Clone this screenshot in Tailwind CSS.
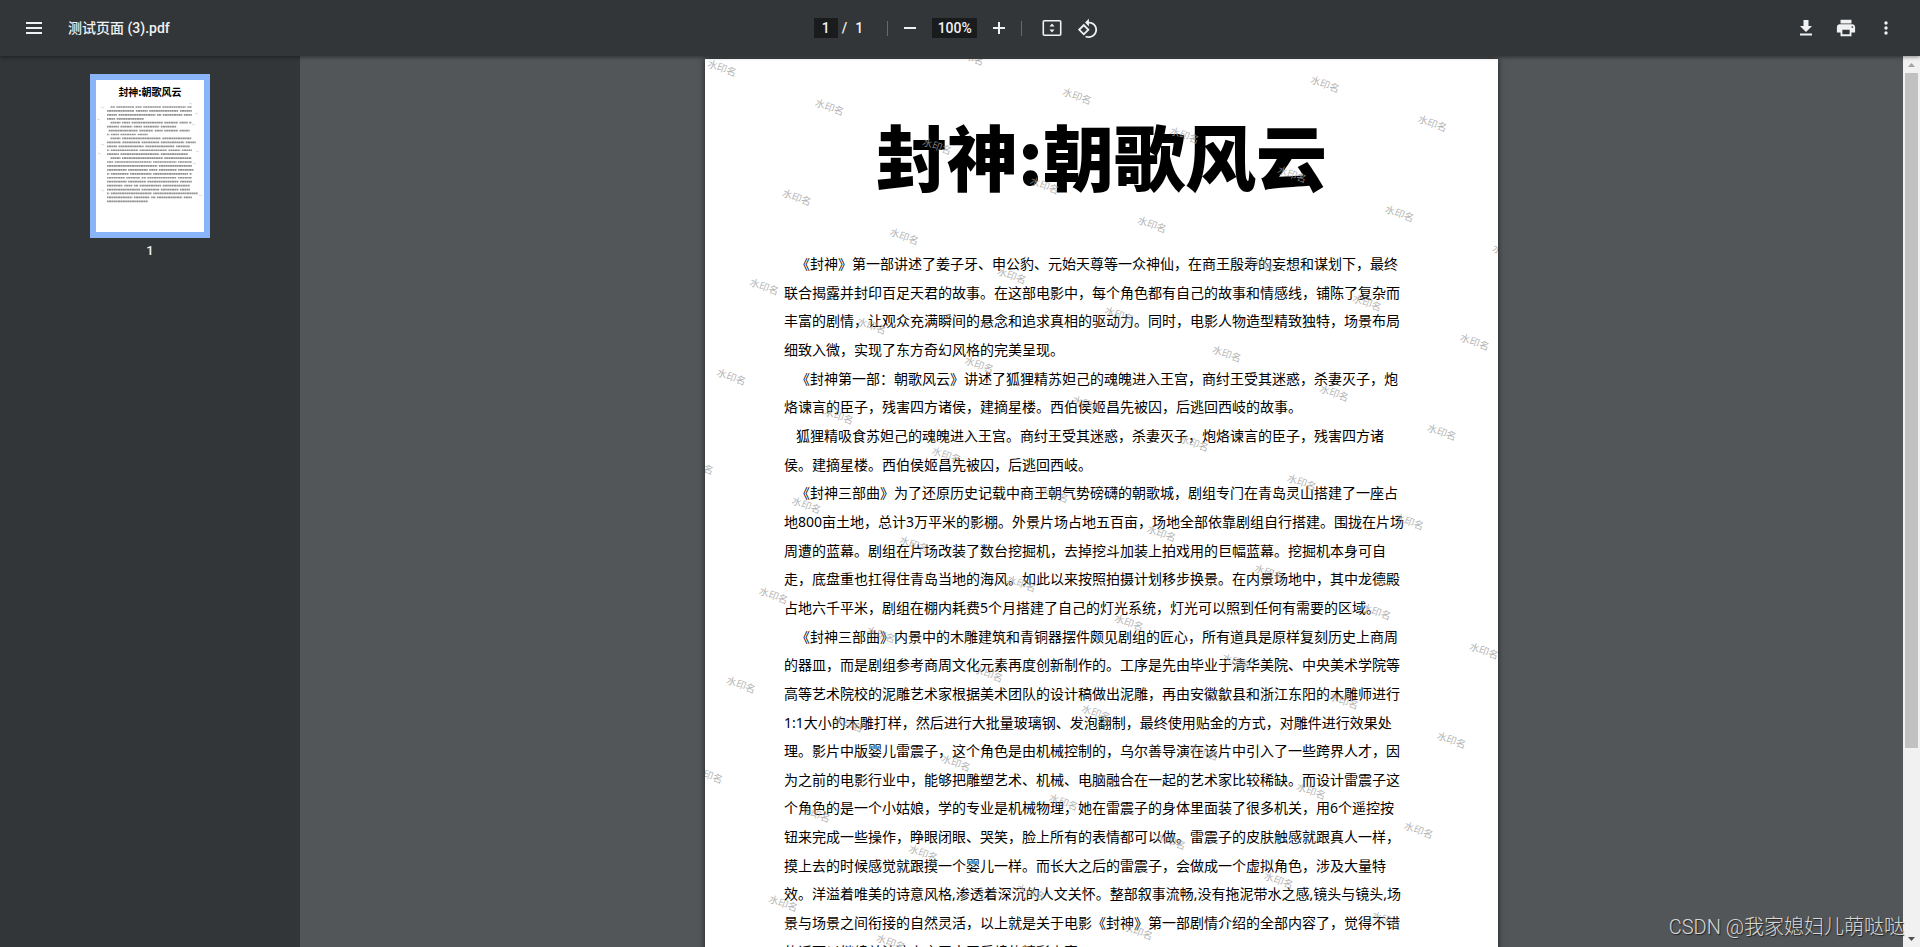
<!DOCTYPE html>
<html lang="zh-CN">
<head>
<meta charset="utf-8">
<title>测试页面 (3).pdf</title>
<script src="https://cdn.jsdelivr.net/npm/@tailwindcss/browser@4"></script>
</head>
<body class="h-screen overflow-hidden bg-[#525659] font-['Roboto','Noto_Sans_CJK_SC',sans-serif]">
<div class="relative flex h-full flex-col">
  <header class="relative z-10 grid h-14 shrink-0 grid-cols-[1fr_auto_1fr] items-center bg-[#323639] text-[#f1f1f1] shadow-[0_1px_4px_rgba(0,0,0,0.45)]">
    <div class="flex items-center gap-[22px] pl-[22px]">
      <button type="button" aria-label="菜单" class="flex h-6 w-6 items-center justify-center"><svg viewBox="0 0 24 24" class="h-6 w-6" fill="currentColor"><path d="M4 18h16v-2H4v2zm0-5h16v-2H4v2zm0-7v2h16V6H4z"/></svg></button>
      <h1 class="text-sm font-medium">测试页面 (3).pdf</h1>
    </div>
    <div class="flex items-center pr-2 text-sm font-medium">
      <input type="text" value="1" aria-label="页码" class="h-5 w-6 bg-[#191b1c] text-center">
      <span class="pl-1">/</span><span class="pl-2">1</span>
      <span class="ml-6 h-[15px] w-px bg-[#666a6d]"></span>
      <button type="button" aria-label="缩小" class="ml-3 h-5 w-5"><svg viewBox="0 0 20 20" class="h-5 w-5" fill="currentColor"><path d="M4 9h12v2H4z"/></svg></button>
      <input type="text" value="100%" aria-label="缩放" class="ml-3 h-5 w-[45px] bg-[#191b1c] text-center">
      <button type="button" aria-label="放大" class="ml-3 h-5 w-5"><svg viewBox="0 0 20 20" class="h-5 w-5" fill="currentColor"><path d="M9 4h2v5h5v2h-5v5H9v-5H4V9h5z"/></svg></button>
      <span class="ml-3 h-[15px] w-px bg-[#666a6d]"></span>
      <button type="button" aria-label="适合页面" class="ml-5 h-5 w-5"><svg viewBox="0 0 20 20" class="h-5 w-5" fill="none" stroke="currentColor" stroke-width="1.6"><rect x="1.3" y="2.8" width="17.4" height="14.4" rx="1"/><path fill="currentColor" stroke="none" d="M10 5.500l2.500 3h-5zM10 14.500l2.500-3h-5z"/></svg></button>
      <button type="button" aria-label="逆时针旋转" class="ml-4 h-5 w-5"><svg viewBox="1 0 22 22" class="h-5 w-5" fill="currentColor"><path d="M7.34 6.41L.86 12.9l6.49 6.48 6.49-6.48-6.5-6.49zM3.69 12.9l3.66-3.66L11 12.9l-3.66 3.66-3.65-3.66zm15.67-6.26C17.61 4.88 15.3 4 13 4V.76L8.76 5 13 9.24V6c1.79 0 3.58.68 4.95 2.05 2.73 2.73 2.73 7.17 0 9.9C16.58 19.32 14.79 20 13 20c-.97 0-1.94-.21-2.84-.61l-1.49 1.49C10.02 21.62 11.51 22 13 22c2.3 0 4.61-.88 6.36-2.64 3.52-3.51 3.52-9.21 0-12.72z"/></svg></button>
    </div>
    <div class="flex items-center justify-end gap-5 pr-[24px]">
      <button type="button" aria-label="下载" class="h-5 w-5"><svg viewBox="2 2 20 20" class="h-5 w-5" fill="currentColor"><path d="M18 10h-3.500V4h-5v6H6l6 6zM6 17.500v2h12v-2z"/></svg></button>
      <button type="button" aria-label="打印" class="h-5 w-5"><svg viewBox="1 1 22 22" class="h-5 w-5" fill="currentColor"><path d="M19 8H5c-1.660 0-3 1.340-3 3v6h4v4h12v-4h4v-6c0-1.660-1.340-3-3-3zm-3 11H8v-5h8v5zm3-7c-.55 0-1-.45-1-1s.45-1 1-1 1 .45 1 1-.45 1-1 1zm-1-9H6v4h12V3z"/></svg></button>
      <button type="button" aria-label="更多" class="h-5 w-5"><svg viewBox="0 0 20 20" class="h-5 w-5" fill="currentColor"><circle cx="10" cy="5" r="1.700"/><circle cx="10" cy="10" r="1.700"/><circle cx="10" cy="15" r="1.700"/></svg></button>
    </div>
  </header>
  <div class="flex min-h-0 flex-1">
    <aside class="flex w-[300px] shrink-0 flex-col items-center bg-[#323639] pt-[18px]">
      <button type="button" aria-label="第 1 页" class="flex h-[164px] w-[120px] flex-col border-6 border-[#8ab4f8] bg-white">
        <span class="w-full pt-1 text-center font-['Noto_Sans_CJK_SC',sans-serif] text-[10px] leading-4 font-bold text-black">封神:朝歌风云</span>
        <svg id="mini" viewBox="0 0 108 130" class="w-full" fill="none" stroke="#929292" stroke-width="1.700"></svg>
      </button>
      <span class="pt-[3px] text-[13px] leading-5 font-medium text-[#f1f1f1]">1</span>
    </aside>
    <main class="flex min-w-0 flex-1 justify-center overflow-hidden pt-[3px]">
      <article class="relative h-[1123px] w-[793px] shrink-0 overflow-hidden bg-white px-[79px] text-black shadow-[0_0_6px_rgba(0,0,0,0.6)]">
        <h2 class="pt-[43px] text-center font-['Noto_Sans_CJK_SC',sans-serif] text-[71px] leading-[104px] font-extrabold">封神:朝歌风云</h2>
        <div id="body" class="mt-[44px] flex h-[716px] flex-col justify-between font-['Noto_Sans','Noto_Sans_CJK_SC',sans-serif] text-[14px] leading-7 whitespace-nowrap"></div>
        <div id="marks" aria-hidden="true" class="pointer-events-none absolute top-[-454px] left-[3px] grid h-[1337px] w-[1373px] origin-top-left rotate-20 grid-cols-12 grid-rows-14 place-items-center font-['Noto_Sans_CJK_SC',sans-serif] text-[10px] text-[#a0a0a0]/80"></div>
      </article>
    </main>
    <div class="flex w-[17px] shrink-0 flex-col items-center bg-[#f1f1f1]">
      <div class="flex h-[17px] items-center"><svg viewBox="0 0 7 4" class="h-1 w-[7px]" fill="#a3a3a3"><path d="M0 4L3.500 0 7 4z"/></svg></div>
      <div class="h-[675px] w-[13px] bg-[#c1c1c1]"></div>
      <div class="mt-auto flex h-[17px] items-center"><svg viewBox="0 0 7 4" class="h-1 w-[7px]" fill="#505050"><path d="M0 0L3.500 4 7 0z"/></svg></div>
    </div>
  </div>
  <div class="absolute right-4 bottom-1 z-20 font-['Roboto','Noto_Sans_CJK_SC',sans-serif] text-[20px] leading-8 font-light text-[#d8d8d8] [text-shadow:1px_1px_1px_#222]">CSDN @我家媳妇儿萌哒哒</div>
</div>
<script>
const paragraphs = [
 ["《封神》第一部讲述了姜子牙、申公豹、元始天尊等一众神仙，在商王殷寿的妄想和谋划下，最终",
  "联合揭露并封印百足天君的故事。在这部电影中，每个角色都有自己的故事和情感线，铺陈了复杂而",
  "丰富的剧情，让观众充满瞬间的悬念和追求真相的驱动力。同时，电影人物造型精致独特，场景布局",
  "细致入微，实现了东方奇幻风格的完美呈现。"],
 ["《封神第一部：朝歌风云》讲述了狐狸精苏妲己的魂魄进入王宫，商纣王受其迷惑，杀妻灭子，炮",
  "烙谏言的臣子，残害四方诸侯，建摘星楼。西伯侯姬昌先被囚，后逃回西岐的故事。"],
 ["狐狸精吸食苏妲己的魂魄进入王宫。商纣王受其迷惑，杀妻灭子，炮烙谏言的臣子，残害四方诸",
  "侯。建摘星楼。西伯侯姬昌先被囚，后逃回西岐。"],
 ["《封神三部曲》为了还原历史记载中商王朝气势磅礴的朝歌城，剧组专门在青岛灵山搭建了一座占",
  "地800亩土地，总计3万平米的影棚。外景片场占地五百亩，场地全部依靠剧组自行搭建。围拢在片场",
  "周遭的蓝幕。剧组在片场改装了数台挖掘机，去掉挖斗加装上拍戏用的巨幅蓝幕。挖掘机本身可自",
  "走，底盘重也扛得住青岛当地的海风。如此以来按照拍摄计划移步换景。在内景场地中，其中龙德殿",
  "占地六千平米，剧组在棚内耗费5个月搭建了自己的灯光系统，灯光可以照到任何有需要的区域。"],
 ["《封神三部曲》内景中的木雕建筑和青铜器摆件颇见剧组的匠心，所有道具是原样复刻历史上商周",
  "的器皿，而是剧组参考商周文化元素再度创新制作的。工序是先由毕业于清华美院、中央美术学院等",
  "高等艺术院校的泥雕艺术家根据美术团队的设计稿做出泥雕，再由安徽歙县和浙江东阳的木雕师进行",
  "1:1大小的木雕打样，然后进行大批量玻璃钢、发泡翻制，最终使用贴金的方式，对雕件进行效果处",
  "理。影片中版婴儿雷震子，这个角色是由机械控制的，乌尔善导演在该片中引入了一些跨界人才，因",
  "为之前的电影行业中，能够把雕塑艺术、机械、电脑融合在一起的艺术家比较稀缺。而设计雷震子这",
  "个角色的是一个小姑娘，学的专业是机械物理，她在雷震子的身体里面装了很多机关，用6个遥控按",
  "钮来完成一些操作，睁眼闭眼、哭笑，脸上所有的表情都可以做。雷震子的皮肤触感就跟真人一样，",
  "摸上去的时候感觉就跟摸一个婴儿一样。而长大之后的雷震子，会做成一个虚拟角色，涉及大量特",
  "效。洋溢着唯美的诗意风格,渗透着深沉的人文关怀。整部叙事流畅,没有拖泥带水之感,镜头与镜头,场",
  "景与场景之间衔接的自然灵活，以上就是关于电影《封神》第一部剧情介绍的全部内容了，觉得不错",
  "的话可以继续关注这上言王电王后续的精彩内容。"]
];
const body = document.getElementById('body');
const mini = document.getElementById('mini');
let row = 0;
for (const lines of paragraphs) {
  lines.forEach((text, i) => {
    const line = document.createElement('p');
    line.textContent = text;
    if (i === 0) line.className = 'pl-3';
    body.append(line);
    // One stroke per run of characters, with a gap at each punctuation mark.
    let d = '';
    for (const run of text.matchAll(/[^，。、《》：]+/g)) {
      const x = 11 + (i === 0 ? 1.6 : 0) + run.index * 1.92;
      d += `M${x} ${7 + row * 3.93}h${run[0].length * 1.92 + 0.4}`;
    }
    const path = document.createElementNS('http://www.w3.org/2000/svg', 'path');
    path.setAttribute('d', d);
    path.setAttribute('stroke-dasharray', '1.600 .35 2.300 .3');
    mini.append(path);
    row++;
  });
}
// Faint watermark ticks on the blank margins of the thumbnail.
const ticks = document.createElementNS('http://www.w3.org/2000/svg', 'path');
ticks.setAttribute('d', 'M5 7l3 1M93 3l3 1M1 19l3 1M99 13l3 1M96 24l3 1M5 44l3 1M100 51l3 1M97 63l3 1M2 53l3 1M103 95l3 1M5 90l3 1');
ticks.setAttribute('stroke', '#dddddd');
ticks.setAttribute('stroke-width', '1');
mini.append(ticks);
const marks = document.getElementById('marks');
for (let n = 0; n < 168; n++) {
  const mark = document.createElement('span');
  mark.textContent = '水印名';
  marks.append(mark);
}
</script>
</body>
</html>
